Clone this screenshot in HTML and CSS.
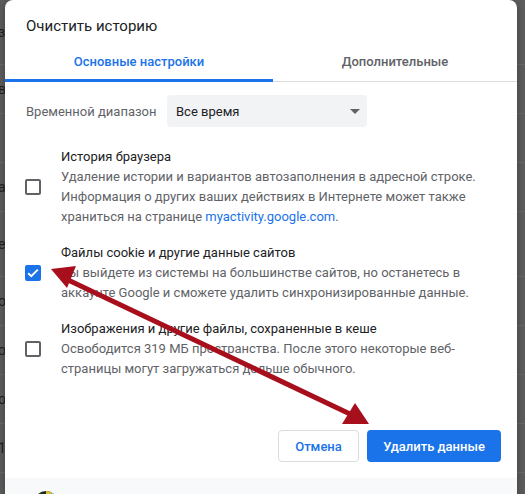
FILE: index.html
```html
<!DOCTYPE html>
<html lang="ru">
<head>
  <meta charset="UTF-8">
  <meta name="viewport" content="width=device-width, initial-scale=1.0">
  <title>Очистить историю</title>
  <link rel="stylesheet" href="styles.css">
</head>
<body>

  <div class="page">
    <div class="page-row first"><span>зв</span></div>
    <div class="page-row"><span>вк</span></div>
    <div class="page-row"><span></span></div>
    <div class="page-row"><span>ар</span></div>
    <div class="page-row tall"><span>ен</span></div>
    <div class="page-row"><span>ол</span></div>
    <div class="page-row"><span>оп</span></div>
    <div class="page-row"><span>оп</span></div>
    <div class="page-row"><span>1,</span></div>
  </div>

  <div class="dialog">
    <h1 class="dialog-title">Очистить историю</h1>

    <div class="tabs">
      <div class="tab active">Основные настройки</div>
      <div class="tab">Дополнительные</div>
    </div>

    <div class="dialog-body">
      <div class="range-row">
        <label class="range-label" for="range">Временной диапазон</label>
        <div class="select" id="range">
          <span>Все время</span>
          <span class="select-arrow"></span>
        </div>
      </div>

      <div class="option">
        <span class="checkbox"></span>
        <div class="option-text">
          <div class="option-title">История браузера</div>
          <div class="option-desc">Удаление истории и вариантов автозаполнения в адресной строке. Информация о других ваших действиях в Интернете может также храниться на странице <a href="#">myactivity.google.com</a>.</div>
        </div>
      </div>

      <div class="option">
        <span class="checkbox checked">
          <svg width="12" height="10" viewBox="0 0 12 10"><path d="M1.2 5.2 L4.3 8.2 L10.8 1.6" fill="none" stroke="#fff" stroke-width="2"/></svg>
        </span>
        <div class="option-text">
          <div class="option-title">Файлы cookie и другие данные сайтов</div>
          <div class="option-desc">Вы выйдете из системы на большинстве сайтов, но останетесь в аккаунте Google и сможете удалить синхронизированные данные.</div>
        </div>
      </div>

      <div class="option">
        <span class="checkbox"></span>
        <div class="option-text">
          <div class="option-title">Изображения и другие файлы, сохраненные в кеше</div>
          <div class="option-desc">Освободится 319 МБ пространства. После этого некоторые веб-страницы могут загружаться дольше обычного.</div>
        </div>
      </div>
    </div>

    <div class="dialog-buttons">
      <button class="btn btn-cancel">Отмена</button>
      <button class="btn btn-primary">Удалить данные</button>
    </div>

    <div class="dialog-footer">
      <svg class="avatar" width="26" height="26" viewBox="0 0 26 26">
        <circle cx="13" cy="13" r="12" fill="#1d2a22"/>
        <path d="M13 1 A12 12 0 0 1 19 2.6 L13 13 Z" fill="#e0c030"/>
        <path d="M19 2.6 A12 12 0 0 1 24 8 L13 13 Z" fill="#8fd8e6"/>
      </svg>
    </div>
  </div>

  <svg class="arrow" width="525" height="494" viewBox="0 0 525 494">
    <line x1="66" y1="279" x2="350" y2="414" stroke="#a70f1d" stroke-width="5"/>
    <polygon points="51,269 76,266 67,288" fill="#a70f1d"/>
    <polygon points="369,424 355,403 342,424" fill="#a70f1d"/>
  </svg>

</body>
</html>
```

FILE: styles.css
```css
body {
  margin: 0;
  width: 525px;
  height: 494px;
  overflow: hidden;
  position: relative;
  background-color: #5b5b5b;
  font-family: Roboto, "Liberation Sans", Arial, sans-serif;
}
.page {
  display: flex;
  flex-direction: column;
}
.page-row {
  height: 48px;
  border-bottom: 1px solid #676767;
  display: flex;
  align-items: center;
  font-size: 14px;
  color: #1f1f1f;
}
.page-row.first {
  height: 64px;
}
.page-row.tall {
  height: 64px;
}
.page-row span {
  margin-left: -2px;
}
.dialog {
  position: absolute;
  top: 0;
  left: 5px;
  width: 512px;
  bottom: -40px;
  background-color: #ffffff;
  border-radius: 8px 8px 0 0;
  box-shadow: 0 2px 6px rgba(0, 0, 0, 0.3);
  display: flex;
  flex-direction: column;
}
.dialog-title {
  margin: 0;
  padding: 16px 21px 0;
  font-size: 15px;
  font-weight: 400;
  line-height: 20px;
  color: #202124;
}
.tabs {
  display: flex;
  margin-top: 4px;
  border-bottom: 1px solid #dadce0;
}
.tab {
  position: relative;
  padding: 12px 0 9px;
  line-height: 20px;
  font-size: 13px;
  font-weight: 500;
  color: #5f6368;
  text-align: center;
  flex: 1;
}
.tab.active {
  flex: 0 0 268px;
  color: #1a73e8;
}
.tab.active::after {
  content: "";
  position: absolute;
  left: 0;
  right: 0;
  bottom: -1px;
  height: 3px;
  background-color: #1a73e8;
}
.dialog-body {
  padding: 13px 21px 0 20px;
}
.range-row {
  display: flex;
  align-items: center;
}
.range-label {
  font-size: 13px;
  color: #5f6368;
  width: 141px;
  padding-left: 1px;
}
.select {
  width: 200px;
  height: 32px;
  box-sizing: border-box;
  padding: 0 7px 0 9px;
  background-color: #f1f3f4;
  border-radius: 4px;
  display: flex;
  align-items: center;
  justify-content: space-between;
  font-size: 13px;
  color: #202124;
}
.select-arrow {
  width: 0;
  height: 0;
  border-left: 5px solid transparent;
  border-right: 5px solid transparent;
  border-top: 5px solid #5f6368;
}
.option {
  display: flex;
  align-items: center;
  margin-top: 16px;
  font-size: 13px;
  line-height: 20px;
}
.range-row + .option {
  margin-top: 20px;
}
.checkbox {
  flex: 0 0 auto;
  width: 16px;
  height: 16px;
  box-sizing: border-box;
  border: 2px solid #5f6368;
  border-radius: 2px;
  margin-right: 20px;
  display: flex;
  align-items: center;
  justify-content: center;
}
.checkbox.checked {
  background-color: #1a73e8;
  border-color: #1a73e8;
}
.option-title {
  color: #202124;
}
.option-desc {
  color: #5f6368;
}
.option-desc a {
  color: #1a73e8;
  text-decoration: none;
}
.dialog-buttons {
  display: flex;
  justify-content: flex-end;
  gap: 8px;
  padding: 0 16px;
  margin-top: 51px;
}
.btn {
  height: 32px;
  padding: 0 16px;
  border-radius: 4px;
  font-family: inherit;
  font-size: 13px;
  font-weight: 500;
  cursor: pointer;
}
.btn-cancel {
  width: 81px;
  background-color: #ffffff;
  border: 1px solid #dadce0;
  color: #1a73e8;
}
.btn-primary {
  width: 134px;
  background-color: #1a73e8;
  border: none;
  color: #ffffff;
}
.dialog-footer {
  margin-top: 16px;
  flex: 1;
  background-color: #f8f9fa;
  padding: 12px 0 0 28px;
}
.avatar {
  display: block;
}
.arrow {
  position: absolute;
  top: 0;
  left: 0;
  pointer-events: none;
}
```
